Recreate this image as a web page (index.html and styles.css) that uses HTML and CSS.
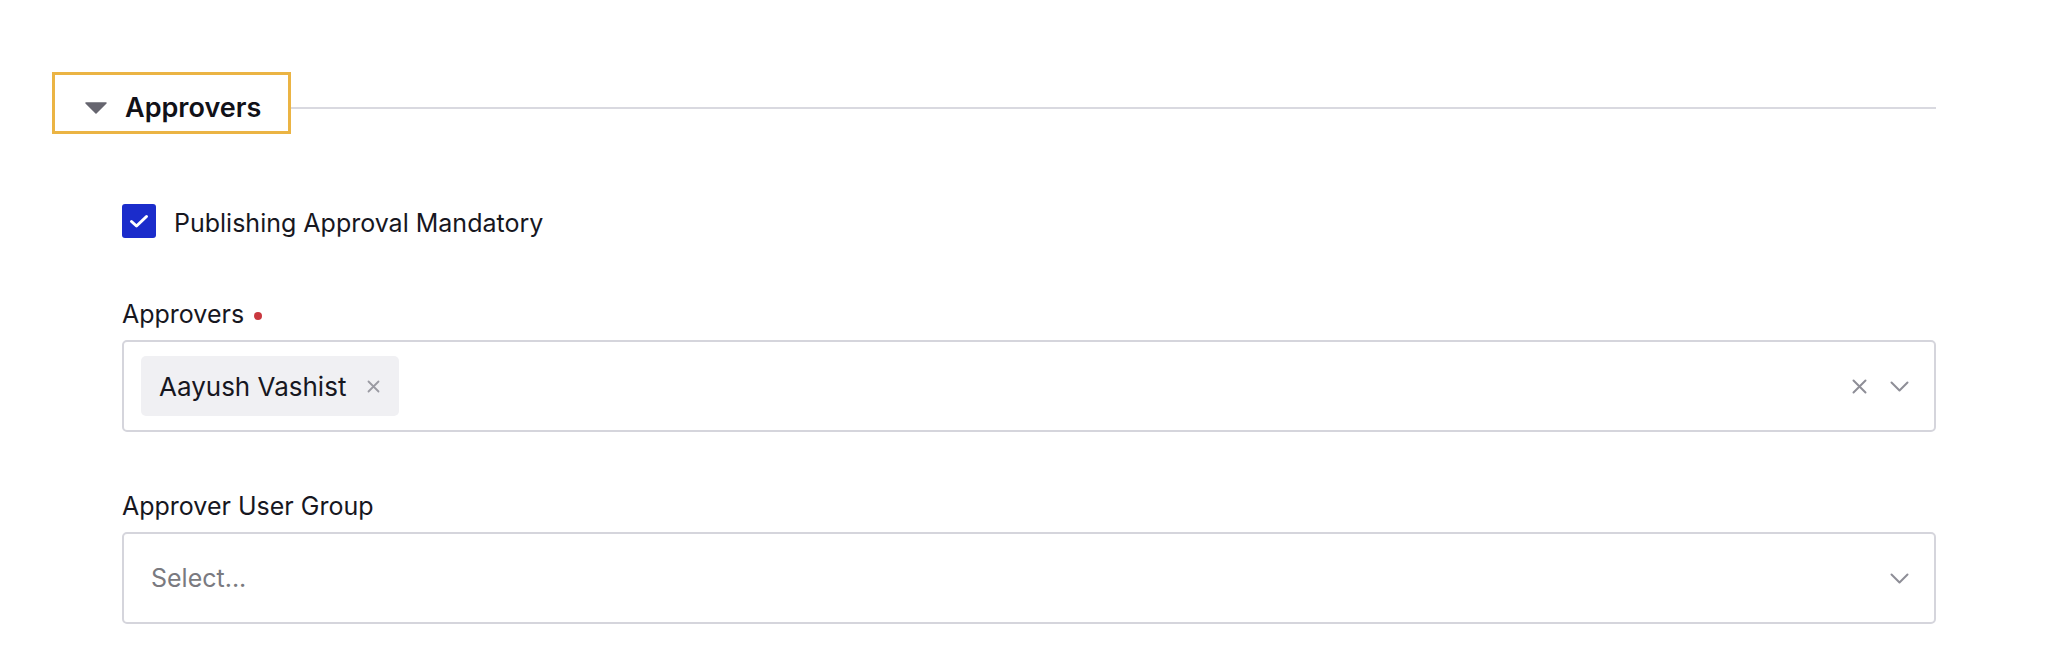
FILE: index.html
```html
<!DOCTYPE html>
<html lang="en">

<head>
    <link rel="stylesheet" href="styles.css">
</head>

<body>
    <div class="page">
        <div class="section-head">
            <button class="section-toggle">
                <svg class="caret" width="22" height="12" viewBox="0 0 22 12">
                    <path d="M1 1 H21 L11 11 Z" fill="#66656f" stroke="#66656f" stroke-width="1.5" stroke-linejoin="round" />
                </svg>
                <span>Approvers</span>
            </button>
            <div class="rule"></div>
        </div>

        <div class="section-body">
            <label class="check-row">
                <span class="checkbox">
                    <svg width="22" height="16" viewBox="0 0 22 16">
                        <path d="M3.5 8.5 L8.5 13 L18.5 3.5" fill="none" stroke="#fff" stroke-width="3" stroke-linecap="round" stroke-linejoin="round" />
                    </svg>
                </span>
                <span class="check-text">Publishing Approval Mandatory</span>
            </label>

            <div class="field">
                <div class="field-label">Approvers <span class="required"></span></div>
                <div class="select">
                    <div class="select-value">
                        <div class="chip">
                            <span>Aayush Vashist</span>
                            <svg width="13" height="13" viewBox="0 0 13 13">
                                <path d="M1.5 1.5 L11.5 11.5 M11.5 1.5 L1.5 11.5" stroke="#9a9aa2" stroke-width="1.8" stroke-linecap="round" />
                            </svg>
                        </div>
                    </div>
                    <div class="indicators">
                        <svg width="15" height="15" viewBox="0 0 15 15">
                            <path d="M1.5 1.5 L13.5 13.5 M13.5 1.5 L1.5 13.5" stroke="#8e8e97" stroke-width="2" stroke-linecap="round" />
                        </svg>
                        <svg width="19" height="11" viewBox="0 0 19 11">
                            <path d="M1.5 1.5 L9.5 9.5 L17.5 1.5" fill="none" stroke="#8e8e97" stroke-width="2" stroke-linecap="round" stroke-linejoin="round" />
                        </svg>
                    </div>
                </div>
            </div>

            <div class="field">
                <div class="field-label">Approver User Group</div>
                <div class="select">
                    <div class="select-value placeholder">Select...</div>
                    <div class="indicators">
                        <svg width="19" height="11" viewBox="0 0 19 11">
                            <path d="M1.5 1.5 L9.5 9.5 L17.5 1.5" fill="none" stroke="#8e8e97" stroke-width="2" stroke-linecap="round" stroke-linejoin="round" />
                        </svg>
                    </div>
                </div>
            </div>
        </div>
    </div>
</body>

</html>
```

FILE: styles.css
```css
body {
    margin: 0;
    padding: 0;
    background: #fff;
    font-family: Inter, "Noto Sans", sans-serif;
    color: #17171f;
}

.page {
    width: 1936px;
    padding-top: 72px;
}

.section-head {
    display: flex;
    align-items: center;
    padding-left: 52px;
}

.section-toggle {
    display: flex;
    align-items: center;
    gap: 18px;
    height: 62px;
    padding: 8px 27px 0 30px;
    background: #fff;
    border: 3px solid #ebb444;
    font-family: inherit;
    font-size: 27px;
    font-weight: 600;
    color: #111118;
    cursor: pointer;
}

.caret {
    margin-top: 2px;
}

.rule {
    flex: 1;
    height: 2px;
    margin-top: 10px;
    background: #d9d9e0;
}

.section-body {
    padding-left: 122px;
    padding-top: 69px;
}

.check-row {
    display: flex;
    align-items: center;
    gap: 18px;
    font-size: 25px;
}

.check-text {
    padding-top: 5px;
}

.checkbox {
    width: 34px;
    height: 34px;
    border-radius: 3px;
    background: #1b2ccb;
    display: flex;
    align-items: center;
    justify-content: center;
}

.field {
    margin-top: 58px;
}

.field + .field {
    margin-top: 56px;
}

.field-label {
    font-size: 25px;
    line-height: 36px;
    margin-bottom: 8px;
    display: flex;
    align-items: center;
    gap: 10px;
}

.required {
    width: 8px;
    height: 8px;
    border-radius: 50%;
    background: #c9383f;
    margin-top: 4px;
}

.select {
    display: flex;
    align-items: center;
    height: 92px;
    box-sizing: border-box;
    border: 2px solid #d5d5dc;
    border-radius: 5px;
    padding: 0 25px 0 17px;
}

.select-value {
    flex: 1;
    display: flex;
    align-items: center;
}

.chip {
    display: flex;
    align-items: center;
    gap: 21px;
    height: 60px;
    padding: 0 19px 0 18px;
    background: #f0f0f3;
    border-radius: 5px;
    font-size: 26px;
}

.placeholder {
    padding-left: 10px;
    font-size: 25px;
    color: #7a7a80;
}

.indicators {
    display: flex;
    align-items: center;
    gap: 23px;
}
```
